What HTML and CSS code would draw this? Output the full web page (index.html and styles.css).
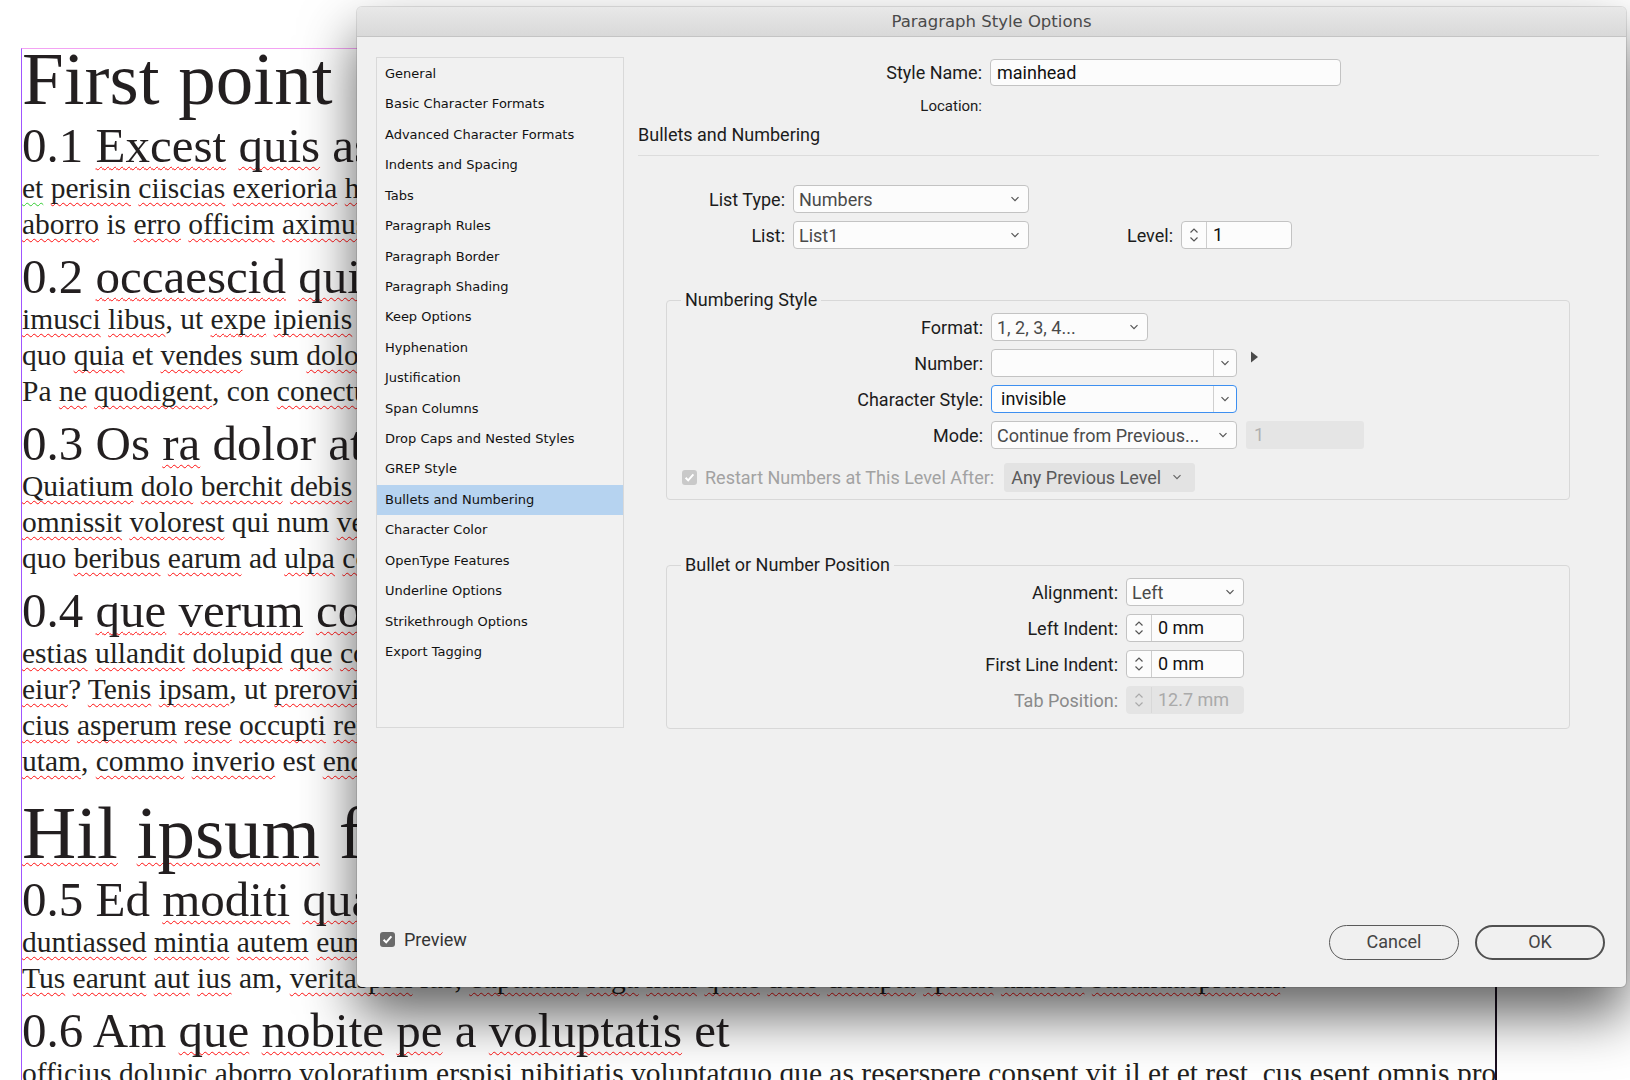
FILE: index.html
```html
<!DOCTYPE html>
<html lang="en">
<head>
<meta charset="utf-8">
<title>Paragraph Style Options</title>
<link rel="stylesheet" href="styles.css">
</head>
<body>
<div class="page">
  <div class="t1">First point</div>
  <div class="t2">0.1 <span class="sp">Excest</span> <span class="sp">quis</span> as <span class="sp">ditatur</span> <span class="sp">sequos</span></div>
  <div class="tb"><span class="gr">et</span> <span class="sp">perisin</span> <span class="sp">ciiscias</span> <span class="sp">exerioria</span> <span class="sp">hitatem</span> <span class="sp">rerspe</span></div>
  <div class="tb"><span class="sp">aborro</span> is <span class="sp">erro</span> <span class="sp">officim</span> <span class="sp">aximus</span> <span class="sp">dolupta</span></div>
  <div class="t2">0.2 <span class="sp">occaescid</span> <span class="sp">qui</span> <span class="sp">oditas</span></div>
  <div class="tb"><span class="sp">imusci</span> <span class="sp">libus</span>, ut <span class="sp">expe</span> <span class="sp">ipienis</span> <span class="sp">sinci</span></div>
  <div class="tb">quo <span class="sp">quia</span> et <span class="sp">vendes</span> sum <span class="sp">dolorit</span></div>
  <div class="tb">Pa <span class="sp">ne</span> <span class="sp">quodigent</span>, con <span class="sp">conectur</span></div>
  <div class="t2">0.3 Os <span class="sp">ra</span> dolor at <span class="sp">evelit</span></div>
  <div class="tb"><span class="sp">Quiatium</span> <span class="sp">dolo</span> <span class="sp">berchit</span> <span class="sp">debis</span> <span class="sp">dolum</span></div>
  <div class="tb"><span class="sp">omnissit</span> <span class="sp">volorest</span> qui num <span class="sp">venient</span></div>
  <div class="tb">quo <span class="sp">beribus</span> <span class="sp">earum</span> ad <span class="sp">ulpa</span> <span class="sp">cori</span></div>
  <div class="t2">0.4 <span class="sp">que</span> <span class="sp">verum</span> <span class="sp">conse</span></div>
  <div class="tb"><span class="sp">estias</span> <span class="sp">ullandit</span> <span class="sp">dolupid</span> <span class="sp">que</span> <span class="sp">cone</span></div>
  <div class="tb"><span class="sp">eiur</span>? <span class="sp">Tenis</span> <span class="sp">ipsam</span>, ut <span class="sp">prerovid</span></div>
  <div class="tb"><span class="sp">cius</span> <span class="sp">asperum</span> <span class="sp">rese</span> <span class="sp">occupti</span> <span class="sp">rerum</span></div>
  <div class="tb"><span class="sp">utam</span>, <span class="sp">commo</span> <span class="sp">inverio</span> est <span class="sp">endae</span></div>
  <div class="t1 t1-next"><span class="sp">Hil</span> <span class="sp">ipsum</span> fugit</div>
  <div class="t2">0.5 Ed <span class="sp">moditi</span> <span class="sp">quam</span></div>
  <div class="tb"><span class="sp">duntiassed</span> <span class="sp">mintia</span> <span class="sp">autem</span> <span class="sp">eum</span></div>
  <div class="tb"><span class="sp">Tus</span> <span class="sp">earunt</span> <span class="sp">aut</span> <span class="sp">ius</span> am, <span class="sp">veritaspici</span> ius, <span class="sp">cuptatum</span> <span class="sp">fuga</span> <span class="sp">nam</span> <span class="sp">quae</span> <span class="sp">dolo</span> <span class="sp">dolupta</span> <span class="sp">spient</span> <span class="sp">ullabor</span> <span class="sp">susandaepratem</span>.</div>
  <div class="t2">0.6 Am <span class="sp">que</span> <span class="sp">nobite</span> <span class="sp">pe</span> a <span class="sp">voluptatis</span> et</div>
  <div class="tb"><span class="sp">officius</span> <span class="sp">dolupic</span> <span class="sp">aborro</span> <span class="sp">voloratium</span> <span class="sp">erspisi</span> <span class="sp">nibitiatis</span> <span class="sp">voluptatquo</span> que as <span class="sp">reserspere</span> <span class="sp">consent</span> vit il et et rest, cus <span class="sp">esent</span> omnis pro</div>
</div>

<div class="dialog">
  <div class="titlebar">Paragraph Style Options</div>
  <div class="dbody">
    <ul class="sidebar">
      <li>General</li>
      <li>Basic Character Formats</li>
      <li>Advanced Character Formats</li>
      <li>Indents and Spacing</li>
      <li>Tabs</li>
      <li>Paragraph Rules</li>
      <li>Paragraph Border</li>
      <li>Paragraph Shading</li>
      <li>Keep Options</li>
      <li>Hyphenation</li>
      <li>Justification</li>
      <li>Span Columns</li>
      <li>Drop Caps and Nested Styles</li>
      <li>GREP Style</li>
      <li class="active">Bullets and Numbering</li>
      <li>Character Color</li>
      <li>OpenType Features</li>
      <li>Underline Options</li>
      <li>Strikethrough Options</li>
      <li>Export Tagging</li>
    </ul>

    <div class="pane">
      <div class="row name-row">
        <span class="lbl w-name">Style Name:</span>
        <div class="textfield name-field">mainhead</div>
      </div>
      <div class="row loc-row">
        <span class="lbl w-name loc">Location:</span>
      </div>
      <div class="section-head">Bullets and Numbering</div>

      <div class="row lt-row">
        <span class="lbl w-list">List Type:</span>
        <div class="select w-listsel"><span class="val">Numbers</span><svg class="chev" width="10" height="6" viewBox="0 0 10 6"><path d="M1.5 1.2l3.5 3.5 3.5-3.5" fill="none" stroke="#555" stroke-width="1.2"/></svg></div>
      </div>
      <div class="row list-row">
        <span class="lbl w-list">List:</span>
        <div class="select w-listsel"><span class="val">List1</span><svg class="chev" width="10" height="6" viewBox="0 0 10 6"><path d="M1.5 1.2l3.5 3.5 3.5-3.5" fill="none" stroke="#555" stroke-width="1.2"/></svg></div>
        <span class="lbl w-level">Level:</span>
        <div class="spinner w-levelsp">
          <span class="arrows"><svg width="10" height="20" viewBox="0 0 10 20"><path d="M1.5 7.5L5 4l3.5 3.5M1.5 12.5L5 16l3.5-3.5" fill="none" stroke="#555" stroke-width="1.2"/></svg></span>
          <span class="sval">1</span>
        </div>
      </div>

      <fieldset class="group g-num">
        <legend>Numbering Style</legend>
        <div class="grows">
          <div class="row">
            <span class="lbl w-num">Format:</span>
            <div class="select w-format"><span class="val">1, 2, 3, 4...</span><svg class="chev" width="10" height="6" viewBox="0 0 10 6"><path d="M1.5 1.2l3.5 3.5 3.5-3.5" fill="none" stroke="#555" stroke-width="1.2"/></svg></div>
          </div>
          <div class="row">
            <span class="lbl w-num">Number:</span>
            <div class="combo w-combo"><span class="cval"></span><span class="cbtn"><svg width="10" height="6" viewBox="0 0 10 6"><path d="M1.5 1.2l3.5 3.5 3.5-3.5" fill="none" stroke="#555" stroke-width="1.2"/></svg></span></div>
            <svg class="tri" width="9" height="12" viewBox="0 0 9 12"><path d="M1 0.5L8 6 1 11.5z" fill="#4a4a4a"/></svg>
          </div>
          <div class="row">
            <span class="lbl w-num">Character Style:</span>
            <div class="combo w-combo focus"><span class="cval">invisible</span><span class="cbtn"><svg width="10" height="6" viewBox="0 0 10 6"><path d="M1.5 1.2l3.5 3.5 3.5-3.5" fill="none" stroke="#555" stroke-width="1.2"/></svg></span></div>
          </div>
          <div class="row">
            <span class="lbl w-num">Mode:</span>
            <div class="select w-combo"><span class="val">Continue from Previous...</span><svg class="chev" width="10" height="6" viewBox="0 0 10 6"><path d="M1.5 1.2l3.5 3.5 3.5-3.5" fill="none" stroke="#555" stroke-width="1.2"/></svg></div>
            <div class="dis-field">1</div>
          </div>
          <div class="row restart-row">
            <svg class="cb" width="15" height="15" viewBox="0 0 15 15"><rect x="0" y="0" width="15" height="15" rx="3" fill="#c9c9c9"/><path d="M3.6 7.8l2.6 2.6 5.2-6" fill="none" stroke="#fff" stroke-width="2"/></svg>
            <span class="dis-lbl">Restart Numbers at This Level After:</span>
            <div class="select dis-select"><span class="val">Any Previous Level</span><svg class="chev" width="10" height="6" viewBox="0 0 10 6"><path d="M1.5 1.2l3.5 3.5 3.5-3.5" fill="none" stroke="#666" stroke-width="1.2"/></svg></div>
          </div>
        </div>
      </fieldset>

      <fieldset class="group g-pos">
        <legend>Bullet or Number Position</legend>
        <div class="grows">
          <div class="row">
            <span class="lbl w-pos">Alignment:</span>
            <div class="select w-pos-ctl"><span class="val">Left</span><svg class="chev" width="10" height="6" viewBox="0 0 10 6"><path d="M1.5 1.2l3.5 3.5 3.5-3.5" fill="none" stroke="#555" stroke-width="1.2"/></svg></div>
          </div>
          <div class="row">
            <span class="lbl w-pos">Left Indent:</span>
            <div class="spinner w-pos-ctl">
              <span class="arrows"><svg width="10" height="20" viewBox="0 0 10 20"><path d="M1.5 7.5L5 4l3.5 3.5M1.5 12.5L5 16l3.5-3.5" fill="none" stroke="#555" stroke-width="1.2"/></svg></span>
              <span class="sval">0 mm</span>
            </div>
          </div>
          <div class="row">
            <span class="lbl w-pos">First Line Indent:</span>
            <div class="spinner w-pos-ctl">
              <span class="arrows"><svg width="10" height="20" viewBox="0 0 10 20"><path d="M1.5 7.5L5 4l3.5 3.5M1.5 12.5L5 16l3.5-3.5" fill="none" stroke="#555" stroke-width="1.2"/></svg></span>
              <span class="sval">0 mm</span>
            </div>
          </div>
          <div class="row">
            <span class="lbl w-pos dim">Tab Position:</span>
            <div class="spinner w-pos-ctl disabled">
              <span class="arrows"><svg width="10" height="20" viewBox="0 0 10 20"><path d="M1.5 7.5L5 4l3.5 3.5M1.5 12.5L5 16l3.5-3.5" fill="none" stroke="#aaa" stroke-width="1.2"/></svg></span>
              <span class="sval">12.7 mm</span>
            </div>
          </div>
        </div>
      </fieldset>
    </div>
  </div>

  <div class="footer">
    <div class="preview">
      <svg class="cb" width="15" height="15" viewBox="0 0 15 15"><rect x="0" y="0" width="15" height="15" rx="3" fill="#6b6b6b"/><path d="M3.6 7.8l2.6 2.6 5.2-6" fill="none" stroke="#fff" stroke-width="2"/></svg>
      <span>Preview</span>
    </div>
    <div class="buttons">
      <div class="btn">Cancel</div>
      <div class="btn btn-default">OK</div>
    </div>
  </div>
</div>
</body>
</html>
```

FILE: styles.css
```css
* { box-sizing: border-box; }
html, body { margin: 0; padding: 0; }
body {
  width: 1630px;
  height: 1080px;
  overflow: hidden;
  background: #ffffff;
  position: relative;
  font-family: "Liberation Serif", serif;
}

/* ---------- document page ---------- */
.page {
  margin: 48px 0 0 21px;
  width: 1476px;
  height: 1040px;
  border-top: 1px solid #f3a3f3;
  border-left: 1px solid #a055ff;
  border-right: 2px solid #1b1020;
  overflow: hidden;
  color: #231f20;
  white-space: nowrap;
}
.t1 { font-size: 75px; line-height: 64px; margin-top: -2px; }
.t1-next { margin-top: 22px; }
.t2 { font-size: 49px; line-height: 48px; margin-top: 11px; }
.tb { font-size: 29.5px; line-height: 36px; }
.sp, .gr {
  text-decoration-line: underline;
  text-decoration-style: wavy;
  text-decoration-color: #ff1010;
  text-decoration-thickness: 1.2px;
  text-underline-offset: 4px;
  text-decoration-skip-ink: none;
}
.gr { text-decoration-color: #33cc33; }

/* ---------- dialog ---------- */
.dialog {
  position: absolute;
  left: 357px;
  top: 7px;
  width: 1269px;
  height: 980px;
  background: #f0f0f0;
  border-radius: 5px;
  box-shadow: 0 28px 55px rgba(0,0,0,0.62), 0 0 0 1px rgba(0,0,0,0.10);
  display: flex;
  flex-direction: column;
  font-family: Roboto, "Liberation Sans", sans-serif;
  font-size: 18px;
  color: #1c1c1c;
}
.titlebar {
  height: 30px;
  flex: none;
  border-radius: 5px 5px 0 0;
  background: linear-gradient(#e8e8e8, #d9d9d9);
  border-bottom: 1px solid #c4c4c4;
  text-align: center;
  font-family: "DejaVu Sans", sans-serif;
  font-size: 16.5px;
  line-height: 29px;
  color: #4a4a4a;
}
.dbody {
  flex: 1;
  display: flex;
  align-items: flex-start;
  padding: 20px 27px 0 19px;
}

/* sidebar */
.sidebar {
  list-style: none;
  margin: 0;
  padding: 1px 0 0 0;
  width: 248px;
  height: 671px;
  flex: none;
  background: #f1f1f1;
  border: 1px solid #d9d9d9;
  font-family: "DejaVu Sans", sans-serif;
  font-size: 13px;
  color: #111;
}
.sidebar li {
  height: 30.43px;
  line-height: 30.43px;
  padding-left: 8px;
  white-space: nowrap;
}
.sidebar li.active { background: #b6d3f0; }

/* main pane */
.pane {
  margin-left: 14px;
  width: 961px;
  flex: none;
}
.row {
  display: flex;
  align-items: center;
  height: 28px;
}
.lbl {
  flex: none;
  text-align: right;
  margin-right: 8px;
  white-space: nowrap;
}
.w-name { width: 344px; }
.w-list { width: 147px; }
.w-level { width: 144px; }
.w-num { width: 316px; }
.w-pos { width: 451px; }
.dim { color: #8a8a8a; }

.name-row { margin-top: 2px; height: 27px; }
.loc-row { margin-top: 10px; height: 20px; }
.loc { font-size: 15px; }
.section-head {
  margin-top: 7px;
  line-height: 24px;
  padding-bottom: 8px;
  border-bottom: 1px solid #dcdcdc;
}
.lt-row { margin-top: 29px; }
.list-row { margin-top: 8px; }

.textfield, .select, .combo, .spinner {
  height: 28px;
  background: #fcfcfc;
  border: 1px solid #c3c3c3;
  border-radius: 4px;
  flex: none;
}
.name-field {
  width: 351px;
  height: 27px;
  line-height: 25px;
  padding-left: 6px;
  color: #111;
}
.select {
  display: flex;
  align-items: center;
  justify-content: space-between;
  padding: 0 8px 0 5px;
}
.select .val { color: #4a4a4a; white-space: nowrap; }
.w-listsel { width: 236px; }
.w-format { width: 157px; }
.w-combo { width: 246px; }
.w-levelsp { width: 111px; }
.w-pos-ctl { width: 118px; }

.combo { display: flex; }
.combo .cval {
  flex: 1;
  line-height: 26px;
  padding-left: 9px;
  color: #111;
}
.combo .cbtn {
  width: 23px;
  flex: none;
  border-left: 1px solid #cfcfcf;
  display: flex;
  align-items: center;
  justify-content: center;
}
.combo.focus { border-color: #3d8ff0; }
.tri { margin-left: 13px; margin-top: -12px; }

.dis-field {
  margin-left: 9px;
  width: 118px;
  height: 28px;
  background: #e5e5e5;
  border-radius: 3px;
  line-height: 28px;
  padding-left: 8px;
  color: #b0b0b0;
}

.spinner { display: flex; }
.spinner .arrows {
  width: 25px;
  flex: none;
  border-right: 1px solid #cdcdcd;
  display: flex;
  align-items: center;
  justify-content: center;
}
.spinner .sval {
  line-height: 26px;
  padding-left: 6px;
  color: #111;
}
.spinner.disabled { background: #e4e4e4; border-color: #e4e4e4; }
.spinner.disabled .arrows { border-right-color: #d8d8d8; }
.spinner.disabled .sval { color: #aaaaaa; }

/* group boxes */
.group {
  margin: 0 29px 0 28px;
  padding: 0;
  border: 1px solid #d8d8d8;
  border-radius: 4px;
  min-width: 0;
}
.group legend {
  margin-left: 14px;
  padding: 0 4px;
  line-height: 24px;
  color: #1c1c1c;
}
.g-num { margin-top: 39px; }
.g-num .grows { padding: 1px 0 8px 0; }
.g-num .grows .row + .row { margin-top: 8px; }
.g-num .grows .row.restart-row { margin-top: 14px; }
.g-pos { margin-top: 53px; }
.g-pos .grows { padding: 1px 0 14px 0; }
.g-pos .grows .row + .row { margin-top: 8px; }

.restart-row .cb { margin-left: 15px; flex: none; }
.dis-lbl {
  margin-left: 8px;
  color: #a2a2a2;
  white-space: nowrap;
}
.dis-select {
  margin-left: 10px;
  width: 191px;
  height: 29px;
  background: #e3e3e3;
  border-color: #e3e3e3;
  border-radius: 3px;
  padding-left: 6px;
  padding-right: 12px;
}
.dis-select .val { color: #5a5a5a; }

/* footer */
.footer {
  flex: none;
  display: flex;
  align-items: center;
  justify-content: space-between;
  padding: 0 21px 27px 23px;
}
.preview {
  display: flex;
  align-items: center;
  margin-bottom: 6px;
  color: #333;
}
.preview .cb { margin-right: 9px; }
.buttons { display: flex; gap: 16px; }
.btn {
  width: 130px;
  height: 35px;
  border: 1.5px solid #5a5a5a;
  border-radius: 18px;
  text-align: center;
  line-height: 32px;
  color: #444;
}
.btn-default { border-width: 2.5px; border-color: #505050; line-height: 30px; }
```
